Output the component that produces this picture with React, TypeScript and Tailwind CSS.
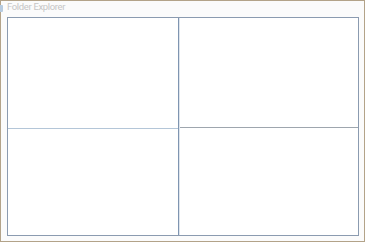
import React from "react";

export default function App() {
  return (
    <div className="w-[366px] h-[243px] bg-white relative overflow-hidden">
      <div className="w-[365px] h-[242px] border border-[#b3a389] bg-[#fbfbfb] flex flex-col pl-[6px] pr-[5px] relative">
        <div className="absolute left-[-4px] top-[4px] w-[6px] h-[7px] rounded-[1px] bg-[#b6cbe0]" />
        <div className="h-[16px] flex items-start pt-[1px] text-[9.5px] tracking-[-0.35px] leading-[10px] text-[#c6c6c6]" style={{ fontFamily: 'Roboto, "Liberation Sans", Arial, sans-serif' }}>
          Folder Explorer
        </div>
        <div className="w-[352px] h-[219px] border border-[#8b9bb0] bg-white flex">
          <div className="w-[170px] flex flex-col">
            <div className="h-[111px] border-b border-[#b4c6d8]" />
            <div className="flex-1" />
          </div>
          <div className="w-[2px] flex">
            <div className="w-px bg-[#7f95b1]" />
            <div className="w-px bg-[#dfe5ec]" />
          </div>
          <div className="flex-1 flex flex-col">
            <div className="h-[110px] border-b border-[#9ea6ae]" />
            <div className="flex-1" />
          </div>
        </div>
      </div>
    </div>
  );
}
